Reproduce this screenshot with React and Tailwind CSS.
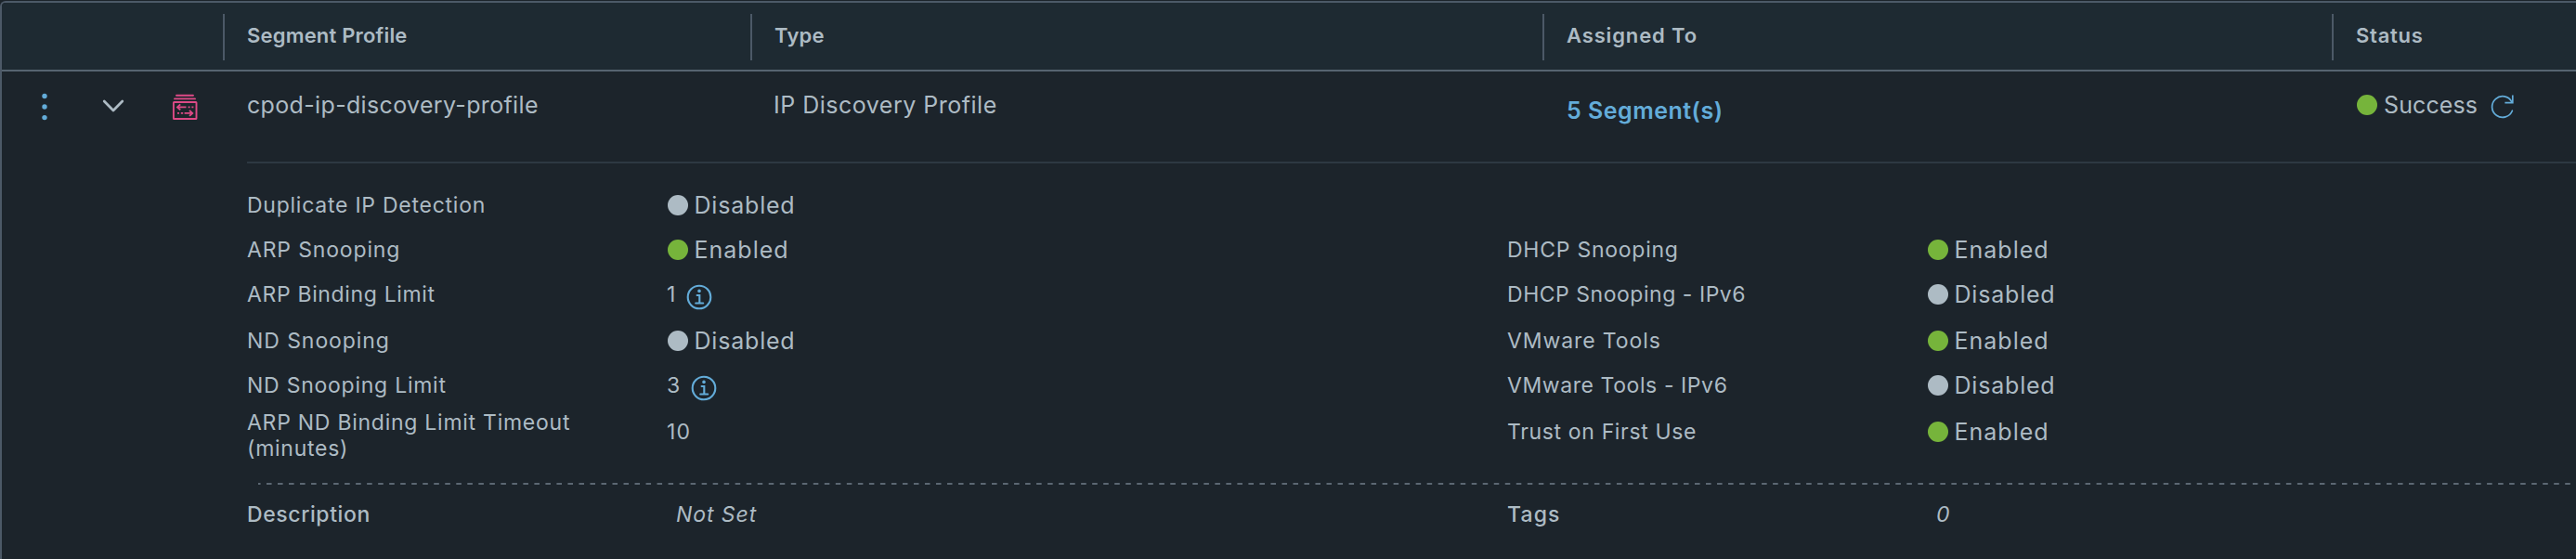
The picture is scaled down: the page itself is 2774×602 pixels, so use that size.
const columns = [
  { label: 'Segment Profile', width: 'w-[568px]', tracking: 'tracking-[0.19px]' },
  { label: 'Type', width: 'w-[853px]', tracking: 'tracking-[0.26px]' },
  { label: 'Assigned To', width: 'w-[850px]', tracking: 'tracking-[0.86px]' },
  { label: 'Status', width: 'flex-1', tracking: 'tracking-[0.73px]' },
];

const settings = [
  {
    left: { label: 'Duplicate IP Detection', tracking: 'tracking-[0.75px]', enabled: false },
  },
  {
    left: { label: 'ARP Snooping', tracking: 'tracking-[0.84px]', enabled: true },
    right: { label: 'DHCP Snooping', tracking: 'tracking-[0.75px]', enabled: true },
  },
  {
    left: { label: 'ARP Binding Limit', tracking: 'tracking-[0.65px]', value: '1', valueWidth: 'w-[21px]', info: true },
    right: { label: 'DHCP Snooping - IPv6', tracking: 'tracking-[0.53px]', enabled: false },
  },
  {
    gap: true,
    left: { label: 'ND Snooping', tracking: 'tracking-[0.93px]', enabled: false },
    right: { label: 'VMware Tools', tracking: 'tracking-[0.9px]', enabled: true },
  },
  {
    left: { label: 'ND Snooping Limit', tracking: 'tracking-[0.75px]', value: '3', valueWidth: 'w-[26px]', info: true },
    right: { label: 'VMware Tools - IPv6', tracking: 'tracking-[0.58px]', enabled: false },
  },
  {
    gap: true,
    left: { label: 'ARP ND Binding Limit Timeout (minutes)', tracking: 'tracking-[0.74px]', value: '10', tall: true },
    right: { label: 'Trust on First Use', tracking: 'tracking-[0.65px]', enabled: true },
  },
];

function Dot({ on }) {
  return <span className={`size-[22px] shrink-0 rounded-full ${on ? 'bg-[#76b43b]' : 'bg-[#adbbc4]'}`} />;
}

function KebabIcon() {
  return (
    <svg className="h-[32px] w-[8px]" viewBox="0 0 8 32" fill="#63acd9">
      <circle cx="4" cy="4.5" r="2.7" />
      <circle cx="4" cy="16" r="2.7" />
      <circle cx="4" cy="27.6" r="2.7" />
    </svg>
  );
}

function ChevronIcon() {
  return (
    <svg className="h-[16px] w-[24px]" viewBox="0 0 24 16" fill="none" stroke="#adbbc4" strokeWidth="2.7" strokeLinecap="round" strokeLinejoin="round">
      <path d="M2.2 2 12 12 21.8 2" />
    </svg>
  );
}

function ProfileIcon() {
  return (
    <svg className="size-[28px]" viewBox="0 0 28 28" fill="none" stroke="#dd4a86" strokeWidth="1.9">
      <path d="M5 1.8h18M3 5.4h22" strokeLinecap="round" />
      <rect x="1.9" y="9" width="24.6" height="18" rx="0.6" />
      <path d="M6 14.4h9.5M17.6 14.4h2M21.4 14.4h2M6 20.9h2M9.8 20.9h2.4M13.6 20.9h8.6" />
      <path d="M9.2 11.4 6 14.4l3.2 3M19 17.9l3.2 3-3.2 3" />
    </svg>
  );
}

function RefreshIcon() {
  return (
    <svg className="size-[28px]" viewBox="0 0 28 28" fill="none" stroke="#63acd9" strokeWidth="1.7">
      <path d="M24.4 18.2A11.3 11.3 0 1 1 23.9 8.8" strokeLinecap="round" />
      <path d="M24.8 1.6v8.1h-8.4" />
    </svg>
  );
}

function InfoIcon() {
  return (
    <svg className="size-[28px] shrink-0" viewBox="0 0 28 28" fill="none" stroke="#63acd9" strokeWidth="2.1">
      <circle cx="14" cy="14" r="12.3" />
      <circle cx="14" cy="7.4" r="1.8" fill="#63acd9" stroke="none" />
      <path d="M11.6 12h2.7v8.4M10.2 20.5h8" strokeLinecap="round" />
    </svg>
  );
}

function Value({ item }) {
  if (item.value) {
    return (
      <div className="flex items-center pl-px">
        <span className={`${item.valueWidth ?? ''} pt-px text-[23px] tracking-[1.1px]`}>{item.value}</span>
        {item.info && (
          <span className="pt-[6px]">
            <InfoIcon />
          </span>
        )}
      </div>
    );
  }
  return (
    <div className="flex items-center gap-[7px] pl-[1.5px] text-[25px]">
      <Dot on={item.enabled} />
      <span className={`pt-[2px] ${item.enabled ? 'tracking-[1px]' : 'tracking-[0.8px]'}`}>{item.enabled ? 'Enabled' : 'Disabled'}</span>
    </div>
  );
}

export default function App() {
  return (
    <div className="h-[602px] w-full overflow-hidden bg-[#1c242b] pt-px font-[Inter,sans-serif] text-[#adbbc4]">
      <div className="h-full w-full rounded-tl-[6px] border-t-2 border-l-2 border-[#4c5967]">
        <div className="flex h-[74px] items-start rounded-tl-[4px] border-b-2 border-[#566470] bg-[#1e2a32] pt-[12px] pl-[238px]">
          {columns.map((c) => (
            <div key={c.label} className={`flex h-[50px] items-center border-l-2 border-[#4c5967] pb-[3px] pl-[24px] text-[22px] font-semibold whitespace-nowrap ${c.width} ${c.tracking}`}>
              {c.label}
            </div>
          ))}
        </div>

        <div className="flex h-[97px] items-start text-[25px] whitespace-nowrap">
          <div className="flex h-[76px] w-[238px] items-center">
            <div className="w-[66px] pl-[42px]"><KebabIcon /></div>
            <div className="w-[117px] pl-[42px]"><ChevronIcon /></div>
            <ProfileIcon />
          </div>
          <div className="flex h-[74px] w-[568px] items-center pl-[26px] tracking-[0.34px]">cpod-ip-discovery-profile</div>
          <div className="flex h-[74px] w-[853px] items-center pl-[25px] tracking-[0.5px]">IP Discovery Profile</div>
          <a className="flex h-[86px] w-[850px] items-center pl-[26px] font-semibold tracking-[0.5px] text-[#63acd9]">5 Segment(s)</a>
          <div className="flex h-[72px] flex-1 items-center pl-[27px]">
            <Dot on />
            <span className="ml-[7px] pt-[2px] tracking-[0.1px]">Success</span>
            <span className="ml-[13px] pt-[4px]"><RefreshIcon /></span>
          </div>
        </div>

        <div className="ml-[264px] border-t-2 border-[#2d3842] pt-[21px]">
          {settings.map((row) => (
            <div key={row.left.label} className={`-ml-px grid h-[48px] grid-cols-[452px_904px_454px_1fr] grid-rows-[48px] items-center ${row.gap ? 'mt-[2px]' : ''}`}>
              <div className={`pl-px text-[23px] ${row.left.tracking} ${row.left.tall ? 'w-[370px] pt-[8px] leading-[28.5px]' : ''}`}>{row.left.label}</div>
              <Value item={row.left} />
              {row.right && (
                <>
                  <div className={`pl-[2px] text-[23px] ${row.right.tracking}`}>{row.right.label}</div>
                  <div className="-ml-px"><Value item={row.right} /></div>
                </>
              )}
            </div>
          ))}
        </div>

        <div className="mt-[31px] ml-[276px] h-[2px] bg-[linear-gradient(90deg,#5b6772_0_6px,transparent_6px)] bg-[length:12.02px_2px] bg-[position:-3px_0]" />

        <div className="ml-[264px] grid h-[64px] grid-cols-[452px_905px_453px_1fr] items-center pt-px text-[23px]">
          <div className="font-medium tracking-[0.6px]">Description</div>
          <div className="pl-[10px] tracking-[0.92px] italic">Not Set</div>
          <div className="font-medium tracking-[1.12px]">Tags</div>
          <div className="pl-[9px] italic">0</div>
        </div>
      </div>
    </div>
  );
}
